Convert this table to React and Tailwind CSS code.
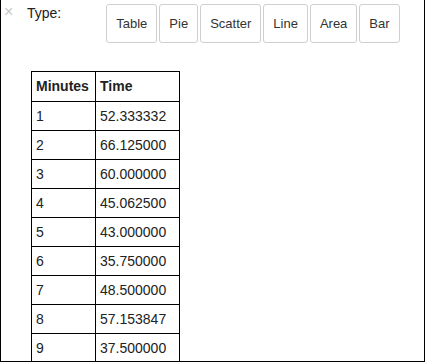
import React, { useState } from 'react';

const chartTypes = ['Table', 'Pie', 'Scatter', 'Line', 'Area', 'Bar'];

const rows = [
  [1, '52.333332'],
  [2, '66.125000'],
  [3, '60.000000'],
  [4, '45.062500'],
  [5, '43.000000'],
  [6, '35.750000'],
  [7, '48.500000'],
  [8, '57.153847'],
  [9, '37.500000'],
];

// Chart widget: type picker above a minutes/time data table
const App = () => {
  const [type, setType] = useState('Table');

  return (
    <div
      className="w-[425px] h-[362px] border-x border-b border-black overflow-hidden bg-white text-[#222]"
      style={{ fontFamily: '"Liberation Sans", Arial, sans-serif' }}
    >
      <div className="flex items-start">
        <span className="ml-[3px] mt-[4px] w-[10px] text-[16px] leading-[16px] text-[#c8c8c8]">×</span>
        <span className="ml-[13px] mt-[5px] text-[14px] leading-[16px] text-[#222]">Type:</span>
        <div className="ml-[45px] mt-[4px] flex gap-[2px]">
          {chartTypes.map((t) => (
            <button
              key={t}
              onClick={() => setType(t)}
              className="h-[39px] px-[9px] border border-[#cfcfcf] rounded-[3px] bg-white text-[13px] text-[#333]"
            >
              {t}
            </button>
          ))}
        </div>
      </div>

      <table className="ml-[30px] mt-[28px] border-collapse text-[14px]">
        <thead>
          <tr className="h-[30px]">
            <th className="w-[64px] border border-black px-[4px] text-left font-bold">Minutes</th>
            <th className="w-[84px] border border-black px-[4px] text-left font-bold">Time</th>
          </tr>
        </thead>
        <tbody>
          {rows.map(([m, t]) => (
            <tr key={m} className="h-[29px]">
              <td className="border border-black px-[4px]">{m}</td>
              <td className="border border-black px-[4px]">{t}</td>
            </tr>
          ))}
        </tbody>
      </table>
      <span className="hidden">{type}</span>
    </div>
  );
};

export default App;
